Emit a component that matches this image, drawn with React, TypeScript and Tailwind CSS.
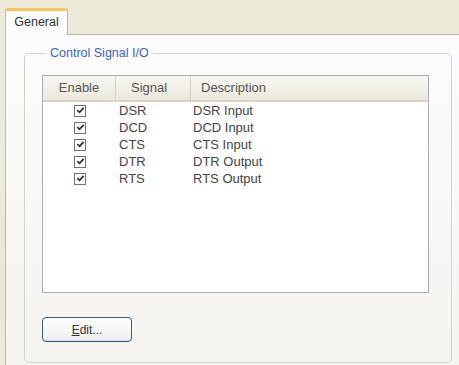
const rows = [
  { signal: "DSR", description: "DSR Input" },
  { signal: "DCD", description: "DCD Input" },
  { signal: "CTS", description: "CTS Input" },
  { signal: "DTR", description: "DTR Output" },
  { signal: "RTS", description: "RTS Output" },
];

function CheckBox() {
  return (
    <span className="flex h-[12px] w-[12px] items-center justify-center border border-[#6b7280] bg-white">
      <svg viewBox="0 0 10 10" className="h-[9px] w-[9px]">
        <path d="M1.5 4.5 L4 7 L8.5 2" fill="none" stroke="#2f2f2f" strokeWidth="2" />
      </svg>
    </span>
  );
}

export default function App() {
  return (
    <div className="flex h-[365px] w-[459px] flex-col overflow-hidden bg-[#ECE9D8] font-['Liberation_Sans',Arial,sans-serif] text-[13px] text-[#444]">
      {/* tab strip */}
      <div className="flex h-[34px] items-end pl-[5px]">
        <div className="relative z-10 -mb-px flex h-[27px] w-[63px] items-center justify-center rounded-t-[3px] border border-b-0 border-[#b5b9ba] border-t-[3px] border-t-[#f7c558] bg-[#fcfcfe] pb-[2px] text-[12.5px] text-[#333]">
          General
        </div>
      </div>

      {/* tab page */}
      <div className="ml-[5px] flex-1 border-l border-t border-[#b5b9ba] bg-gradient-to-b from-[#fcfcfe] to-[#f5f3ef] pl-[18px] pt-[10px]">
        <fieldset className="h-[318px] w-[428px] rounded-[5px] border border-[#d3d2c6] px-[17px] pb-0">
          <legend className="ml-[4px] px-[4px] text-[12.5px] leading-[16px] text-[#3d63c9]">Control Signal I/O</legend>

          {/* list view */}
          <div className="mt-[14px] h-[218px] w-[387px] border border-[#a9adb3] bg-white">
            <div className="flex h-[26px] border-b-[2px] border-[#d8d4c4] bg-gradient-to-b from-[#f8f7f1] to-[#ebe9dc] text-[#555]">
              <div className="flex w-[73px] items-center justify-center border-r border-[#d4d0c2]">Enable</div>
              <div className="flex w-[75px] items-center border-r border-[#d4d0c2] pl-[15px]">Signal</div>
              <div className="flex flex-1 items-center pl-[10px]">Description</div>
            </div>
            <div className="flex flex-col">
              {rows.map((row) => (
                <div key={row.signal} className="flex h-[17px] items-center leading-[15px]">
                  <div className="flex w-[73px] justify-center pl-[1px]">
                    <CheckBox />
                  </div>
                  <div className="w-[75px] pl-[3px]">{row.signal}</div>
                  <div className="flex-1 pl-[2px]">{row.description}</div>
                </div>
              ))}
            </div>
          </div>

          <button className="mt-[24px] flex h-[25px] w-[90px] items-center justify-center rounded-[4px] border border-[#3e5a77] bg-gradient-to-b from-[#fefefe] to-[#eef0f0] text-[12px] text-[#333] shadow-[inset_0_-1px_0_#d6dde4]">
            <span>
              <span className="underline">E</span>dit...
            </span>
          </button>
        </fieldset>
      </div>
    </div>
  );
}
